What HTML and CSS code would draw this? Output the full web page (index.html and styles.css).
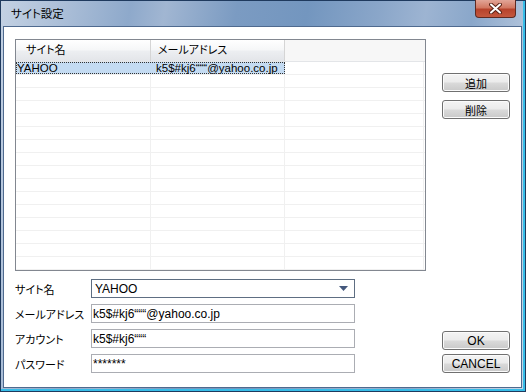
FILE: index.html
```html
<!DOCTYPE html>
<html lang="ja">
<head>
    <meta charset="UTF-8">
    <title>サイト設定</title>
    <link rel="stylesheet" href="styles.css">
</head>
<body>
<div class="window">
    <header class="titlebar">
        <span class="title">サイト設定</span>
        <div class="close">
            <svg width="13" height="11" viewBox="0 0 13 11">
                <path d="M2 1.5 L11 9.5 M11 1.5 L2 9.5" stroke="#5a2418" stroke-width="4" stroke-linecap="round"/>
                <path d="M2 1.5 L11 9.5 M11 1.5 L2 9.5" stroke="#ffffff" stroke-width="2" stroke-linecap="round"/>
            </svg>
        </div>
    </header>
    <div class="client">
        <div class="main">
            <div class="list">
                <div class="list-head">
                    <div class="hcol c1">サイト名</div>
                    <div class="hcol c2">メールアドレス</div>
                    <div class="hcol c3"></div>
                </div>
                <div class="row selected">
                    <div class="focus">
                        <div class="cell c1">YAHOO</div>
                        <div class="cell c2">k5$#kj6“““@yahoo.co.jp</div>
                    </div>
                    <div class="cell c3"></div>
                </div>
                <div class="row"><div class="cell c1"></div><div class="cell c2"></div><div class="cell c3"></div></div>
                <div class="row"><div class="cell c1"></div><div class="cell c2"></div><div class="cell c3"></div></div>
                <div class="row"><div class="cell c1"></div><div class="cell c2"></div><div class="cell c3"></div></div>
                <div class="row"><div class="cell c1"></div><div class="cell c2"></div><div class="cell c3"></div></div>
                <div class="row"><div class="cell c1"></div><div class="cell c2"></div><div class="cell c3"></div></div>
                <div class="row"><div class="cell c1"></div><div class="cell c2"></div><div class="cell c3"></div></div>
                <div class="row"><div class="cell c1"></div><div class="cell c2"></div><div class="cell c3"></div></div>
                <div class="row"><div class="cell c1"></div><div class="cell c2"></div><div class="cell c3"></div></div>
                <div class="row"><div class="cell c1"></div><div class="cell c2"></div><div class="cell c3"></div></div>
                <div class="row"><div class="cell c1"></div><div class="cell c2"></div><div class="cell c3"></div></div>
                <div class="row"><div class="cell c1"></div><div class="cell c2"></div><div class="cell c3"></div></div>
                <div class="row"><div class="cell c1"></div><div class="cell c2"></div><div class="cell c3"></div></div>
                <div class="row"><div class="cell c1"></div><div class="cell c2"></div><div class="cell c3"></div></div>
                <div class="row"><div class="cell c1"></div><div class="cell c2"></div><div class="cell c3"></div></div>
                <div class="row"><div class="cell c1"></div><div class="cell c2"></div><div class="cell c3"></div></div>
            </div>
            <div class="form">
                <div class="field">
                    <label>サイト名</label>
                    <div class="combo">
                        <span>YAHOO</span>
                        <svg width="9" height="5" viewBox="0 0 9 5"><path d="M0 0 H9 L4.5 5 Z" fill="#44587c"/></svg>
                    </div>
                </div>
                <div class="field">
                    <label>メールアドレス</label>
                    <input class="text" type="text" value="k5$#kj6“““@yahoo.co.jp">
                </div>
                <div class="field">
                    <label>アカウント</label>
                    <input class="text" type="text" value="k5$#kj6“““">
                </div>
                <div class="field">
                    <label>パスワード</label>
                    <input class="text" type="text" value="*******">
                </div>
            </div>
        </div>
        <div class="side">
            <div class="group">
                <button class="btn ja">追加</button>
                <button class="btn ja">削除</button>
            </div>
            <div class="group tight">
                <button class="btn">OK</button>
                <button class="btn">CANCEL</button>
            </div>
        </div>
    </div>
</div>
</body>
</html>
```

FILE: styles.css
```css
*{
    margin: 0;
    padding: 0;
    box-sizing: border-box;
}
body{
    font-family: "Liberation Sans", "Noto Sans CJK JP", sans-serif;
    font-size: 12px;
    font-feature-settings: "palt";
    color: #000;
    background: #fff;
}
.window
{
    width: 526px;
    height: 392px;
    display: flex;
    flex-direction: column;
    padding: 0 3px 3px 2px;
    border: 1px solid #1f3a5e;
    background: linear-gradient(100deg, #c3d1e3 0%, #a8bcd6 12%, #8ea9cb 22%, #a1b6d2 28%, #7b9bc2 40%, #7396bf 52%, #8aa6c9 64%, #9db4d2 72%, #8aa7ca 80%, #b3c5dc 90%, #c6d5e6 100%);
    box-shadow: inset -2px -2px 0 #37bde8;
}
.titlebar
{
    height: 25px;
    display: flex;
    justify-content: space-between;
    align-items: flex-start;
}
.title
{
    margin: 6px 0 0 8px;
    font-size: 11.5px;
    line-height: 14px;
}
.close
{
    width: 41px;
    height: 18px;
    margin: -1px 6px 0 0;
    display: flex;
    justify-content: center;
    align-items: center;
    border: 1px solid #5e2a22;
    border-top: none;
    border-radius: 0 0 4px 4px;
    background: linear-gradient(#e2a597 0%, #d27862 45%, #b7432c 55%, #c4583e 100%);
}
.client
{
    flex: 1;
    display: flex;
    gap: 16px;
    padding: 12px 11px 14px 11px;
    background: #fff;
    border: 1px solid #4f6a8f;
}
.main
{
    width: 411px;
    display: flex;
    flex-direction: column;
}
.list
{
    height: 232px;
    overflow: hidden;
    border: 1px solid #828790;
}
.list-head
{
    display: flex;
    height: 22px;
    border-bottom: 1px solid #e3e5e8;
    background: #f7f7f7;
}
.hcol
{
    font-size: 11px;
    line-height: 21px;
    padding-left: 10px;
}
.hcol.c1,
.hcol.c2
{
    background: linear-gradient(#ffffff 0%, #f6f7f8 45%, #eceef1 55%, #e3e5e9 100%);
    border-right: 1px solid #d5d5d5;
}
.hcol.c2
{
    padding-left: 7px;
}
.c1
{
    width: 135px;
}
.c2
{
    width: 134px;
}
.c3
{
    flex: 1;
    border-right: 1px solid #f0f0f0;
    margin-right: 1px;
}
.hcol.c3
{
    border-right: none;
}
.row
{
    display: flex;
    height: 13px;
    border-bottom: 1px solid #f0f0f0;
}
.cell
{
    font-size: 11.5px;
    line-height: 12px;
    border-right: 1px solid #f0f0f0;
    white-space: nowrap;
    overflow: hidden;
}
.focus
{
    display: flex;
    outline: 1px dotted #333;
    outline-offset: -1px;
    background: #c4dbf2;
}
.selected .c1,
.selected .c2
{
    border-right-color: #c4dbf2;
    padding-left: 1px;
}
.selected .c2
{
    padding-left: 5px;
}
.form
{
    margin-top: 8px;
    display: flex;
    flex-direction: column;
    gap: 6px;
}
.field
{
    display: flex;
    align-items: center;
    height: 19px;
}
.field label
{
    width: 76px;
    font-size: 11px;
}
.combo
{
    width: 264px;
    height: 19px;
    display: flex;
    justify-content: space-between;
    align-items: center;
    padding: 0 6px 0 3px;
    border: 1px solid #5e6e82;
}
.text
{
    width: 264px;
    height: 19px;
    padding: 0 1px;
    border: 1px solid #abadb3;
    font: inherit;
    color: #000;
    outline: none;
}
.side
{
    width: 68px;
    display: flex;
    flex-direction: column;
    justify-content: space-between;
    padding-top: 34px;
}
.group
{
    display: flex;
    flex-direction: column;
    gap: 8px;
}
.group.tight
{
    gap: 4px;
}
.btn
{
    width: 68px;
    height: 19px;
    font: inherit;
    color: #000;
    border: 1px solid #707070;
    border-radius: 3px;
    background: linear-gradient(#f4f4f4 0%, #ebebeb 48%, #dadada 52%, #c9c9c9 100%);
    box-shadow: inset 0 0 0 1px #fbfbfb;
}
.btn.ja
{
    font-size: 11px;
}
```
